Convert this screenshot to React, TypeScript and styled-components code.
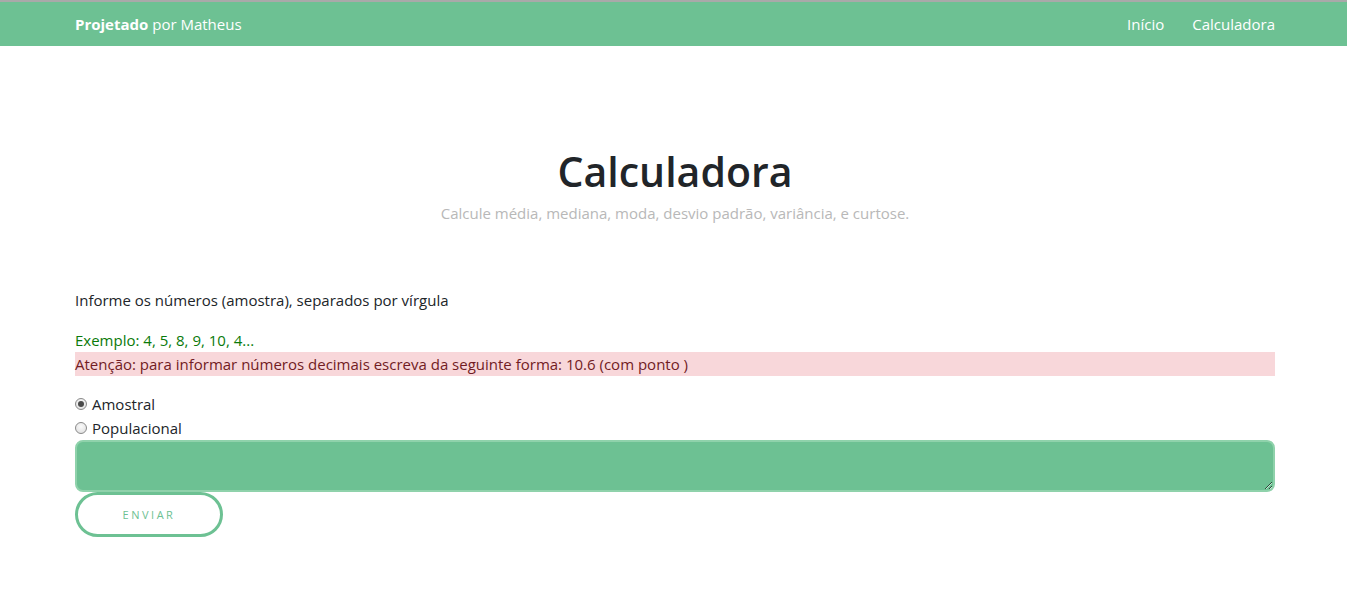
import React from "react";
import styled, { createGlobalStyle } from "styled-components";

const Global = createGlobalStyle`
  html, body { margin: 0; padding: 0; background: #fff; }
  body { font-family: "Segoe UI", "Open Sans", "Noto Sans", sans-serif; color: #212529; font-size: 15px; }
  * { box-sizing: border-box; }
`;

const TopLine = styled.div`
  height: 2px;
  background: #a9a9a9;
`;

const NavBar = styled.nav`
  background: #6dc193;
  height: 44px;
  display: flex;
  align-items: center;
  justify-content: space-between;
  padding: 0 72px 0 75px;
`;

const Brand = styled.a`
  color: #fff;
  font-size: 15px;
  text-decoration: none;
  strong { font-weight: 700; }
`;

const NavLinks = styled.div`
  display: flex;
  gap: 28px;
`;

const NavLink = styled.a`
  color: #fff;
  font-size: 15px;
  text-decoration: none;
`;

const Main = styled.main`
  width: 1200px;
  margin-left: 75px;
`;

const Hero = styled.header`
  text-align: center;
  padding-top: 97px;
`;

const Title = styled.h1`
  margin: 0;
  font-size: 41px;
  font-weight: 600;
  line-height: 56px;
  color: #212529;
`;

const Subtitle = styled.p`
  margin: 4px 0 0;
  font-size: 15px;
  color: #b8b8b8;
  line-height: 20px;
`;

const Form = styled.form`
  margin-top: 66px;
  display: flex;
  flex-direction: column;
`;

const Label = styled.p`
  margin: 0 0 17px;
  font-size: 15px;
  line-height: 22px;
`;

const Hint = styled.p<{ $variant?: "ok" | "warn" }>`
  margin: 0;
  font-size: 15px;
  line-height: 24px;
  color: ${(p) => (p.$variant === "warn" ? "#721c24" : "#0a7a0a")};
  background: ${(p) => (p.$variant === "warn" ? "#f8d7da" : "transparent")};
`;

const Options = styled.div`
  margin-top: 16px;
  display: flex;
  flex-direction: column;
`;

const Option = styled.label`
  display: flex;
  align-items: center;
  font-size: 15px;
  line-height: 24px;
`;

const Radio = styled.input.attrs({ type: "radio" })`
  appearance: none;
  margin: 0 5px 0 0;
  width: 12px;
  height: 12px;
  border-radius: 50%;
  border: 1px solid #8a8a8a;
  background: radial-gradient(circle at 50% 35%, #fafafa 0%, #dcdcdc 100%);
  display: grid;
  place-items: center;
  &:checked::after {
    content: "";
    width: 6px;
    height: 6px;
    border-radius: 50%;
    background: #4a4a4a;
  }
`;

const Area = styled.textarea`
  height: 52px;
  width: 100%;
  background: #6dc193;
  border: 2px solid #8fd2ab;
  border-radius: 8px;
  resize: vertical;
  display: block;
`;

const SendButton = styled.button`
  width: 148px;
  height: 45px;
  border: 3px solid #6dc193;
  border-radius: 23px;
  background: #fff;
  color: #6dc193;
  font-family: inherit;
  font-size: 11px;
  letter-spacing: 2.5px;
  text-transform: uppercase;
  cursor: pointer;
`;

export default function App() {
  return (
    <>
      <Global />
      <TopLine />
      <NavBar>
        <Brand href="#"><strong>Projetado</strong> por Matheus</Brand>
        <NavLinks>
          <NavLink href="#">Início</NavLink>
          <NavLink href="#">Calculadora</NavLink>
        </NavLinks>
      </NavBar>
      <Main>
        <Hero>
          <Title>Calculadora</Title>
          <Subtitle>Calcule média, mediana, moda, desvio padrão, variância, e curtose.</Subtitle>
        </Hero>
        <Form onSubmit={(e) => e.preventDefault()}>
          <Label>Informe os números (amostra), separados por vírgula</Label>
          <Hint $variant="ok">Exemplo: 4, 5, 8, 9, 10, 4...</Hint>
          <Hint $variant="warn">Atenção: para informar números decimais escreva da seguinte forma: 10.6 (com ponto )</Hint>
          <Options>
            <Option><Radio name="tipo" defaultChecked />Amostral</Option>
            <Option><Radio name="tipo" />Populacional</Option>
          </Options>
          <Area />
          <SendButton type="submit">Enviar</SendButton>
        </Form>
      </Main>
    </>
  );
}
